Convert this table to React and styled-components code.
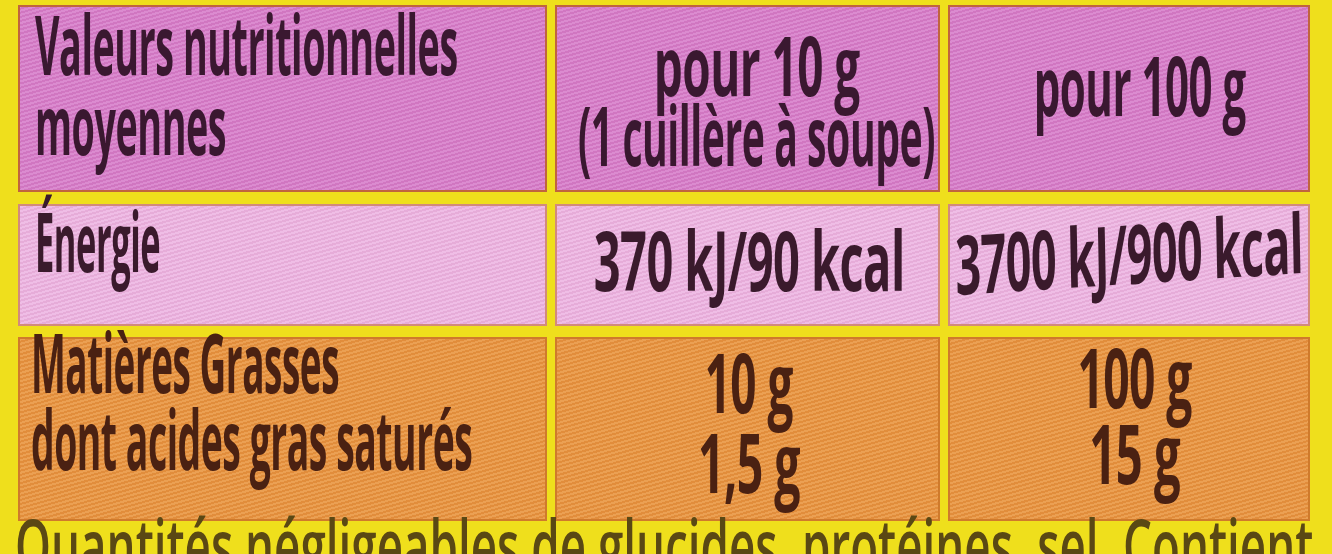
import React from "react";
import styled, { createGlobalStyle } from "styled-components";

const Global = createGlobalStyle`
  html, body { margin: 0; padding: 0; background: #efdf1c; }
  #root { width: 1332px; height: 554px; overflow: hidden; }
`;

const tones = {
  head: "#d67bc9",
  energy: "#edb4e2",
  fat: "#e8933b",
};
const edges = {
  head: "#c0643e",
  energy: "#d28a7c",
  fat: "#cf7a2c",
};
const inks = {
  head: "#3a1830",
  energy: "#3a1a2c",
  fat: "#4a2112",
};

const Page = styled.div`
  width: 1332px;
  height: 554px;
  box-sizing: border-box;
  overflow: hidden;
  background: #efdf1c;
  padding: 5px 22px 0 18px;
  display: flex;
  flex-direction: column;
`;

const Table = styled.div`
  display: grid;
  grid-template-columns: 529px 385px 1fr;
  grid-template-rows: 187px 122px 184px;
  gap: 11.5px 8px;
`;

const Cell = styled.div`
  box-sizing: border-box;
  background-color: ${(p) => tones[p.$tone]};
  background-image: repeating-linear-gradient(
    -16deg,
    rgba(255, 255, 255, 0.12) 0 2px,
    rgba(120, 40, 60, 0.06) 2px 4px
  );
  border: 2px solid ${(p) => edges[p.$tone]};
  display: flex;
  flex-direction: column;
  justify-content: ${(p) => p.$v || "center"};
  align-items: ${(p) => (p.$align === "left" ? "flex-start" : "center")};
  padding: ${(p) => p.$pad || "0"};
  color: ${(p) => inks[p.$tone]};
  min-width: 0;
`;

const Text = styled.div`
  display: block;
  white-space: nowrap;
  font-family: "Open Sans", "Liberation Sans", sans-serif;
  font-weight: 700;
  font-size: 82px;
  line-height: ${(p) => p.$lh || 80}px;
  letter-spacing: -1px;
  margin-top: ${(p) => p.$mt || 0}px;
  transform: scaleX(${(p) => p.$sx || 0.46}) rotate(${(p) => p.$rot || 0}deg);
  transform-origin: ${(p) => (p.$align === "left" ? "left center" : "center center")};
`;

const Note = styled.div`
  margin: -13px 0 0 -3px;
  white-space: nowrap;
  font-family: "Open Sans", "Liberation Sans", sans-serif;
  font-weight: 600;
  font-size: 74px;
  line-height: 74px;
  color: #5a4814;
  transform: scaleX(0.618);
  transform-origin: left center;
`;

export default function App() {
  return (
    <>
      <Global />
      <Page>
        <Table>
          <Cell $tone="head" $align="left" $v="flex-start" $pad="0 0 0 15px">
            <Text $align="left" $sx={0.46} $mt={-4}>
              Valeurs nutritionnelles
            </Text>
            <Text $align="left" $sx={0.46}>
              moyennes
            </Text>
          </Cell>
          <Cell $tone="head" $pad="0 0 0 18px">
            <Text $lh={70} $sx={0.56}>
              pour 10 g
            </Text>
            <Text $lh={70} $sx={0.478}>
              (1 cuillère à soupe)
            </Text>
          </Cell>
          <Cell $tone="head" $pad="0 0 30px 22px">
            <Text $sx={0.513}>pour 100 g</Text>
          </Cell>

          <Cell $tone="energy" $align="left" $v="flex-start" $pad="0 0 0 15px">
            <Text $align="left" $sx={0.42} $mt={-6}>
              Énergie
            </Text>
          </Cell>
          <Cell $tone="energy" $pad="0 0 12px 4px">
            <Text $sx={0.573}>370 kJ/90 kcal</Text>
          </Cell>
          <Cell $tone="energy" $pad="0 0 26px 0">
            <Text $sx={0.548} $rot={-2}>
              3700 kJ/900 kcal
            </Text>
          </Cell>

          <Cell $tone="fat" $align="left" $v="flex-start" $pad="0 0 0 11px">
            <Text $align="left" $lh={77} $sx={0.45} $mt={-16}>
              Matières Grasses
            </Text>
            <Text $align="left" $lh={77} $sx={0.455}>
              dont acides gras saturés
            </Text>
          </Cell>
          <Cell $tone="fat" $pad="0 0 16px 2px">
            <Text $sx={0.56}>10 g</Text>
            <Text $sx={0.567}>1,5 g</Text>
          </Cell>
          <Cell $tone="fat" $pad="0 0 30px 12px">
            <Text $lh={76} $sx={0.563}>
              100 g
            </Text>
            <Text $lh={76} $sx={0.576}>
              15 g
            </Text>
          </Cell>
        </Table>
        <Note>Quantités négligeables de glucides, protéines, sel. Contient</Note>
      </Page>
    </>
  );
}
